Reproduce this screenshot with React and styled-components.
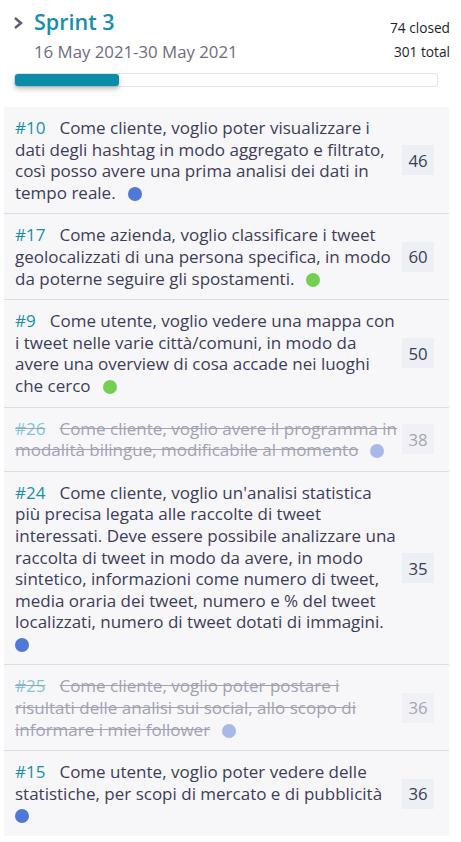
import React from "react";
import styled, { createGlobalStyle } from "styled-components";

const stories = [
  {
    id: 10,
    lines: [
      "Come cliente, voglio poter visualizzare i",
      "dati degli hashtag in modo aggregato e filtrato,",
      "così posso avere una prima analisi dei dati in",
      "tempo reale.",
    ],
    points: 46,
    dot: "blue",
  },
  {
    id: 17,
    lines: [
      "Come azienda, voglio classificare i tweet",
      "geolocalizzati di una persona specifica, in modo",
      "da poterne seguire gli spostamenti.",
    ],
    points: 60,
    dot: "green",
  },
  {
    id: 9,
    lines: [
      "Come utente, voglio vedere una mappa con",
      "i tweet nelle varie città/comuni, in modo da",
      "avere una overview di cosa accade nei luoghi",
      "che cerco",
    ],
    points: 50,
    dot: "green",
  },
  {
    id: 26,
    lines: [
      "Come cliente, voglio avere il programma in",
      "modalità bilingue, modificabile al momento",
    ],
    points: 38,
    dot: "blue",
    done: true,
  },
  {
    id: 24,
    lines: [
      "Come cliente, voglio un'analisi statistica",
      "più precisa legata alle raccolte di tweet",
      "interessati. Deve essere possibile analizzare una",
      "raccolta di tweet in modo da avere, in modo",
      "sintetico, informazioni come numero di tweet,",
      "media oraria dei tweet, numero e % del tweet",
      "localizzati, numero di tweet dotati di immagini.",
    ],
    points: 35,
    dot: "blue",
    dotBreak: true,
  },
  {
    id: 25,
    lines: [
      "Come cliente, voglio poter postare i",
      "risultati delle analisi sui social, allo scopo di",
      "informare i miei follower",
    ],
    points: 36,
    dot: "blue",
    done: true,
  },
  {
    id: 15,
    lines: [
      "Come utente, voglio poter vedere delle",
      "statistiche, per scopi di mercato e di pubblicità",
    ],
    points: 36,
    dot: "blue",
    dotBreak: true,
  },
];

const dotColors = {
  blue: ["#5078d8", "#a8b9e8"],
  green: ["#74d052", "#b8e6a6"],
};

const GlobalStyle = createGlobalStyle`
  body {
    margin: 0;
    background: #fff;
    font-family: "Open Sans", "Noto Sans", sans-serif;
  }
`;

const Page = styled.div`
  width: 461px;
  padding: 7px 12px 0 4px;
  box-sizing: border-box;
`;

const Header = styled.div`
  display: flex;
  justify-content: space-between;
  padding: 0 0 0 8px;
`;

const TitleBlock = styled.div`
  display: flex;
  gap: 10px;
`;

const Chevron = styled.svg`
  width: 12px;
  height: 14px;
  margin-top: 9px;
`;

const Title = styled.div`
  font-size: 21.5px;
  font-weight: 600;
  color: #1590aa;
  line-height: 30px;
`;

const Dates = styled.div`
  font-size: 16.8px;
  color: #6d6d82;
  margin-top: 3px;
`;

const Counts = styled.div`
  text-align: right;
  font-size: 13.7px;
  color: #1e1e28;
  line-height: 24px;
  padding-top: 9px;
  margin-right: -1px;
`;

const Track = styled.div`
  margin: 9px 11px 0 10px;
  height: 12px;
  border: 1px solid #e5e5ea;
  border-radius: 3px;
  background: #fff;
`;

const Fill = styled.div`
  height: 100%;
  background: #0b8ca7;
  border-radius: 3px;
  box-shadow: 0 3px 5px rgba(0, 0, 0, 0.25);
`;

const List = styled.div`
  margin-top: 20px;
  background: #f7f7fa;
  width: 445px;
`;

const Row = styled.div`
  display: flex;
  align-items: center;
  gap: 4px;
  padding: 10px 15px 10px 11px;
  border-top: ${({ $first }) => ($first ? "none" : "1px solid #dcdce8")};
`;

const Text = styled.div`
  flex: 1;
  font-size: 17px;
  line-height: 21.6px;
  white-space: nowrap;
  color: ${({ $done }) => ($done ? "#a2a2b2" : "#3d3d57")};
  text-decoration: ${({ $done }) => ($done ? "line-through" : "none")};
`;

const Hash = styled.span`
  color: ${({ $done }) => ($done ? "#7cc7d7" : "#1590aa")};
  margin-right: 14px;
`;

const Dot = styled.span`
  display: inline-block;
  width: 14px;
  height: 14px;
  border-radius: 50%;
  margin-left: ${({ $newLine }) => ($newLine ? "0" : "12px")};
  vertical-align: -2px;
  background: ${({ $color }) => $color};
`;

const Badge = styled.div`
  width: 32px;
  height: 30px;
  flex-shrink: 0;
  display: flex;
  align-items: center;
  justify-content: center;
  background: ${({ $done }) => ($done ? "#f0f1f6" : "#eceff4")};
  color: ${({ $done }) => ($done ? "#a5a5b5" : "#3d3d57")};
  font-size: 16.8px;
`;

export default function App() {
  return (
    <Page>
      <GlobalStyle />
      <Header>
        <TitleBlock>
          <Chevron viewBox="0 0 12 14">
            <path d="M3 2 L9 7 L3 12" fill="none" stroke="#5c5c72" strokeWidth="2.4" />
          </Chevron>
          <div>
            <Title>Sprint 3</Title>
            <Dates>16 May 2021-30 May 2021</Dates>
          </div>
        </TitleBlock>
        <Counts>
          <div>74 closed</div>
          <div>301 total</div>
        </Counts>
      </Header>
      <Track>
        <Fill style={{ width: `${(74 / 301) * 100}%` }} />
      </Track>
      <List>
        {stories.map((s, i) => (
          <Row key={s.id} $first={i === 0}>
            <Text $done={s.done}>
              <Hash $done={s.done}>#{s.id}</Hash>
              {s.lines.map((line, j) => (
                <React.Fragment key={j}>
                  {j > 0 && <br />}
                  {line}
                </React.Fragment>
              ))}
              {s.dotBreak && <br />}
              <Dot $newLine={s.dotBreak} $color={dotColors[s.dot][s.done ? 1 : 0]} />
            </Text>
            <Badge $done={s.done}>{s.points}</Badge>
          </Row>
        ))}
      </List>
    </Page>
  );
}
